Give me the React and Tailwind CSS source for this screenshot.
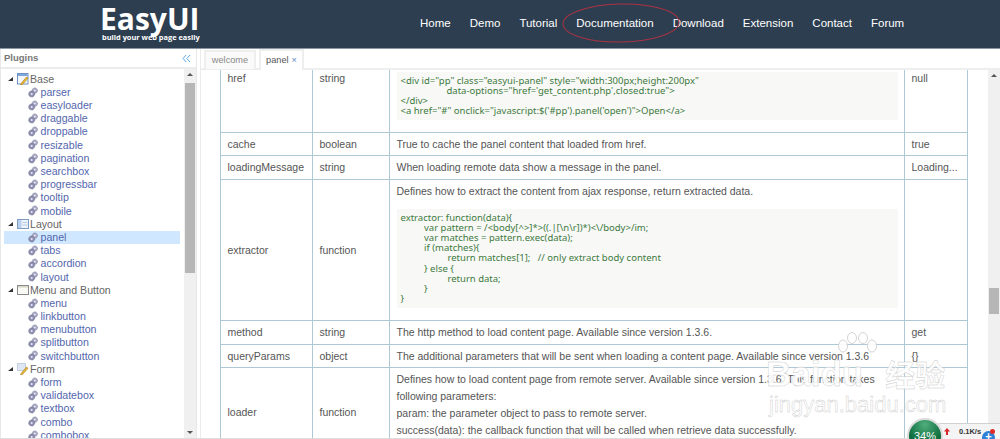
const NAV = ['Home', 'Demo', 'Tutorial', 'Documentation', 'Download', 'Extension', 'Contact', 'Forum']

const TREE = [
  { name: 'Base', icon: 'base', items: ['parser', 'easyloader', 'draggable', 'droppable', 'resizable', 'pagination', 'searchbox', 'progressbar', 'tooltip', 'mobile'] },
  { name: 'Layout', icon: 'layout', items: ['panel', 'tabs', 'accordion', 'layout'] },
  { name: 'Menu and Button', icon: 'menu', items: ['menu', 'linkbutton', 'menubutton', 'splitbutton', 'switchbutton'] },
  { name: 'Form', icon: 'form', items: ['form', 'validatebox', 'textbox', 'combo', 'combobox'] },
]

function Gear() {
  return (
    <svg width="11" height="11" viewBox="0 0 11 11" className="shrink-0">
      <circle cx="6.8" cy="3.6" r="2.7" fill="#a9a9c4" stroke="#77779c" strokeWidth="0.7" strokeDasharray="1 0.6" />
      <circle cx="6.8" cy="3.6" r="0.9" fill="#eeeef6" />
      <circle cx="3.7" cy="7" r="3" fill="#8f8fb2" stroke="#66668c" strokeWidth="0.7" strokeDasharray="1 0.6" />
      <circle cx="3.7" cy="7" r="1" fill="#e8e8f2" />
    </svg>
  )
}

function Pencil() {
  return (
    <g>
      <path d="M4 10.5 L9.5 4 L11 5.3 L5.5 11.5 L3.6 12 Z" fill="#e8b93a" stroke="#a87a18" strokeWidth="0.6" />
    </g>
  )
}

function GroupIcon({ kind }) {
  return (
    <svg width="12" height="12" viewBox="0 0 12 12" className="shrink-0">
      {kind === 'base' && (
        <>
          <rect x="0.5" y="0.5" width="10.5" height="10.5" fill="#f3f7fc" stroke="#6f93c4" />
          <rect x="1" y="1" width="9.5" height="2" fill="#7fa6d8" />
          <Pencil />
        </>
      )}
      {kind === 'layout' && (
        <>
          <rect x="0.5" y="1.5" width="11" height="9" fill="#eef4fb" stroke="#7d9cc4" />
          <rect x="1" y="2" width="3.5" height="8" fill="#b9d1ee" />
          <path d="M5.5 4.5 H10.5 M5.5 7 H10.5" stroke="#b9cbe2" />
        </>
      )}
      {kind === 'menu' && (
        <>
          <rect x="0.5" y="1.5" width="11" height="9" fill="#fbfbf6" stroke="#8b8b8b" />
          <rect x="1" y="2" width="10" height="1.6" fill="#d8d8c8" />
        </>
      )}
      {kind === 'form' && (
        <>
          <rect x="0.5" y="0.5" width="8" height="7" fill="#dfe7f3" stroke="#c2cfe0" />
          <Pencil />
        </>
      )}
    </svg>
  )
}

function Sidebar() {
  return (
    <aside className="flex w-[197px] shrink-0 flex-col border-r border-l border-[#e8e8e8]">
      <div className="flex h-[20px] shrink-0 items-center justify-between border-b-2 border-[#ececec] pl-[3px] pr-[5px]">
        <span className="text-[9.5px] font-bold text-[#777]">Plugins</span>
        <svg width="9" height="9" viewBox="0 0 9 9" fill="none" stroke="#5aa5dc" strokeWidth="1">
          <path d="M4.2 1 L1 4.5 L4.2 8 M8 1 L4.8 4.5 L8 8" />
        </svg>
      </div>
      <div className="flex min-h-0 flex-1">
        <div className="min-w-0 flex-1 overflow-hidden pt-[3.4px] pl-[3px] pr-[4px] text-[10.6px]">
          {TREE.map((g) => (
            <div key={g.name}>
              <div className="flex h-[13.2px] items-center leading-none text-[#666]">
                <svg width="5" height="4" viewBox="0 0 5 4" className="ml-[4px] mr-[4px] shrink-0">
                  <path d="M5 0 V4 H0 Z" fill="#333" />
                </svg>
                <GroupIcon kind={g.icon} />
                <span className="ml-[1px] pt-[1px]">{g.name}</span>
              </div>
              {g.items.map((it) => (
                <div
                  key={it}
                  className={`flex h-[13.2px] items-center pl-[24px] leading-none text-[#5366ad] ${it === 'panel' ? 'bg-[#cfe8ff]' : ''}`}
                >
                  <Gear />
                  <span className="ml-[1.5px]">{it}</span>
                </div>
              ))}
            </div>
          ))}
        </div>
        <Scrollbar thumb="h-[190px]" before="mt-[3px]" />
      </div>
    </aside>
  )
}

function Scrollbar({ thumb, before }) {
  return (
    <div className="flex w-[12px] shrink-0 flex-col bg-[#f0f0f0]">
      <div className="flex h-[11px] shrink-0 items-center justify-center">
        <div className="h-0 w-0 border-x-[3px] border-b-[3px] border-x-transparent border-b-[#555]" />
      </div>
      <div className={`${before} ${thumb} w-[10px] self-center bg-[#b6b6b6]`} />
      <div className="flex-1" />
      <div className="flex h-[11px] shrink-0 items-center justify-center">
        <div className="h-0 w-0 border-x-[3px] border-t-[3px] border-x-transparent border-t-[#555]" />
      </div>
    </div>
  )
}

function Code({ className = '', lines }) {
  return (
    <div className={`bg-[#f8f8f7] pt-[3.5px] pl-[4px] font-['Noto_Sans',sans-serif] text-[9.5px] leading-[10.2px] whitespace-pre text-[#3d7a3d] ${className}`}>
      {lines}
    </div>
  )
}

const Cell = ({ className = '', children }) => (
  <td className={`border border-[#aec8d6] px-[6.5px] py-0 align-middle ${className}`}>{children}</td>
)

function DocTable() {
  return (
    <table className="ml-[19px] w-[747px] table-fixed border-collapse text-[10.5px] leading-[17px] text-[#555]">
      <colgroup>
        <col className="w-[92px]" />
        <col className="w-[77px]" />
        <col className="w-[515px]" />
        <col className="w-[63px]" />
      </colgroup>
      <tbody>
        <tr className="h-[62px]">
          <Cell className="border-t-0 !align-top">href</Cell>
          <Cell className="border-t-0 !align-top">string</Cell>
          <Cell className="border-t-0 !align-top">
            <Code
              className="mt-[2px] mb-[12px] h-[48px]"
              lines={
                <>
                  <div>{'<div id="pp" class="easyui-panel" style="width:300px;height:200px"'}</div>
                  <div className="pl-[46px]">{'data-options="href=\'get_content.php\',closed:true">'}</div>
                  <div>{'</div>'}</div>
                  <div>{'<a href="#" onclick="javascript:$(\'#pp\').panel(\'open\')">Open</a>'}</div>
                </>
              }
            />
          </Cell>
          <Cell className="border-t-0 !align-top">null</Cell>
        </tr>
        <tr className="h-[23px]">
          <Cell>cache</Cell>
          <Cell>boolean</Cell>
          <Cell>True to cache the panel content that loaded from href.</Cell>
          <Cell>true</Cell>
        </tr>
        <tr className="h-[24px]">
          <Cell>loadingMessage</Cell>
          <Cell>string</Cell>
          <Cell>When loading remote data show a message in the panel.</Cell>
          <Cell className="whitespace-nowrap">Loading...</Cell>
        </tr>
        <tr className="h-[141px]">
          <Cell>extractor</Cell>
          <Cell>function</Cell>
          <Cell className="!align-top pt-[2.5px]">
            <div className="mb-[9.5px]">Defines how to extract the content from ajax response, return extracted data.</div>
            <Code
              className="h-[99px]"
              lines={
                <>
                  <div>{'extractor: function(data){'}</div>
                  <div className="pl-[23.5px]">{'var pattern = /<body[^>]*>((.|[\\n\\r])*)<\\/body>/im;'}</div>
                  <div className="pl-[23.5px]">{'var matches = pattern.exec(data);'}</div>
                  <div className="pl-[23.5px]">{'if (matches){'}</div>
                  <div className="pl-[47px]">{'return matches[1];   // only extract body content'}</div>
                  <div className="pl-[23.5px]">{'} else {'}</div>
                  <div className="pl-[47px]">{'return data;'}</div>
                  <div className="pl-[23.5px]">{'}'}</div>
                  <div>{'}'}</div>
                </>
              }
            />
          </Cell>
          <Cell />
        </tr>
        <tr className="h-[24px]">
          <Cell>method</Cell>
          <Cell>string</Cell>
          <Cell>The http method to load content page. Available since version 1.3.6.</Cell>
          <Cell>get</Cell>
        </tr>
        <tr className="h-[23px]">
          <Cell>queryParams</Cell>
          <Cell>object</Cell>
          <Cell className="whitespace-nowrap">The additional parameters that will be sent when loading a content page. Available since version 1.3.6</Cell>
          <Cell>{'{}'}</Cell>
        </tr>
        <tr className="h-[90px]">
          <Cell>loader</Cell>
          <Cell>function</Cell>
          <Cell className="!align-top whitespace-nowrap pt-[2.5px]">
            <div>Defines how to load content page from remote server. Available since version 1.3.6. This function takes</div>
            <div>following parameters:</div>
            <div>param: the parameter object to pass to remote server.</div>
            <div>success(data): the callback function that will be called when retrieve data successfully.</div>
          </Cell>
          <Cell />
        </tr>
      </tbody>
    </table>
  )
}

function Watermark() {
  return (
    <div className="pointer-events-none absolute top-[330px] left-[766px] w-[190px] font-['Liberation_Sans',sans-serif] text-white opacity-90 [-webkit-text-stroke:0.4px_#c4c4c4]">
      <svg width="44" height="30" viewBox="0 0 44 30" className="absolute top-[2px] left-[69px]" fill="#fff" stroke="#d0d0d0">
        <ellipse cx="8" cy="14" rx="4.5" ry="6" />
        <ellipse cx="17" cy="6" rx="4.5" ry="5.5" />
        <ellipse cx="28" cy="6" rx="4.5" ry="5.5" />
        <ellipse cx="37" cy="14" rx="4.5" ry="6" />
      </svg>
      <div className="absolute top-[24px] left-0 flex items-baseline text-[35px] leading-[38px] font-bold whitespace-nowrap">
        <span>Baidu</span>
        <span className="ml-[22px] font-['Noto_Sans_CJK_SC',sans-serif] text-[30px]">经验</span>
      </div>
      <div className="absolute top-[62px] left-[3px] text-[22px] leading-[26px] whitespace-nowrap">jingyan.baidu.com</div>
    </div>
  )
}

function NetWidget() {
  return (
    <div className="absolute top-[415px] left-[905px] h-[24px] w-[95px] overflow-hidden font-['Liberation_Sans',sans-serif]">
      <div className="absolute top-[8px] left-[24px] h-[28px] w-[78px] rounded-l-[12px] border border-[#d0d0d0] bg-[#f4f4f4]" />
      <div className="absolute top-[3px] left-[2px] flex h-[36px] w-[36px] justify-center rounded-full border-[2px] border-[#dcdcdc] bg-[radial-gradient(circle_at_50%_15%,#4fae7c,#0d6b3c_60%)] pt-[10px] text-[11px] leading-[13px] text-white">
        34%
      </div>
      <svg width="6" height="7" viewBox="0 0 6 7" className="absolute top-[13px] left-[39px]">
        <path d="M3 0 L6 3.5 H4 V7 H2 V3.5 H0 Z" fill="#d9262a" />
      </svg>
      <span className="absolute top-[12px] left-[54px] text-[7.5px] leading-[9px] font-bold text-[#333]">0.1K/s</span>
      <div className="absolute top-[16px] left-[77px] flex h-[13px] w-[13px] justify-center rounded-full bg-[#2f7fd6] text-[11px] leading-[11px] font-bold text-white">+</div>
      <div className="absolute top-[14px] left-[85px] h-[5px] w-[5px] rounded-full bg-[#e02a2a]" />
    </div>
  )
}

export default function App() {
  return (
    <div className="relative h-[439px] w-[1000px] overflow-hidden bg-white font-['Liberation_Sans',Arial,sans-serif]">
      <header className="flex h-[49px] items-start border-b border-[#8a97a3] bg-[#2d3e50] text-white">
        <div className="ml-[100px] w-[320px] shrink-0">
          <div className="mt-[2px] font-['Open_Sans',sans-serif] text-[30px] leading-[33px] font-bold">EasyUI</div>
          <div className="-mt-[3px] ml-[2px] font-['Open_Sans',sans-serif] text-[7.4px] leading-[10px] font-bold">build your web page easily</div>
        </div>
        <nav className="flex h-full items-center gap-[19px] text-[11.5px]">
          {NAV.map((n) => (
            <span key={n}>{n}</span>
          ))}
        </nav>
      </header>

      <div className="flex h-[390px] border-b border-[#dddddd]">
        <Sidebar />
        <main className="ml-[3px] flex min-w-0 flex-1 flex-col border-l border-[#ececec]">
          <div className="flex h-[21px] shrink-0 items-end gap-[3px] border-b-2 border-[#eeeeee] pl-[3px] text-[9.2px]">
            <div className="-mb-[1px] flex h-[19px] w-[52px] items-center justify-center border-2 border-b-0 border-[#eeeeee] bg-[#fafafa] text-[#888]">welcome</div>
            <div className="-mb-[2px] flex h-[21px] w-[45px] items-center justify-center gap-[3px] border-2 border-b-0 border-[#eeeeee] bg-white text-[#555]">
              panel
              <span className="text-[#5a86c5]">×</span>
            </div>
          </div>
          <div className="flex min-h-0 flex-1">
            <div className="min-w-0 flex-1 overflow-hidden">
              <DocTable />
            </div>
            <Scrollbar thumb="h-[26px]" before="mt-[207px]" />
          </div>
        </main>
      </div>

      <svg width="122" height="44" viewBox="0 0 122 44" className="pointer-events-none absolute top-[2px] left-[561px]" fill="none" stroke="#a83344" strokeWidth="1">
        <ellipse cx="60" cy="21" rx="58" ry="19" transform="rotate(-1 60 21)" />
      </svg>
      <Watermark />
      <NetWidget />
    </div>
  )
}
